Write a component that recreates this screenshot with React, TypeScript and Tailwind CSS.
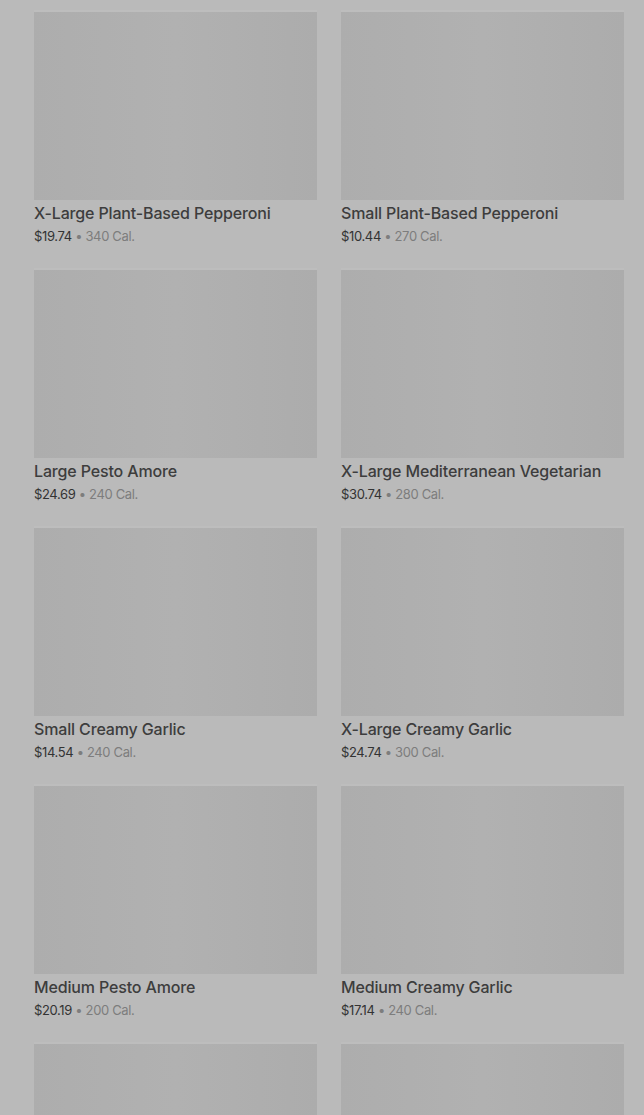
const items = [
  { name: "X-Large Plant-Based Pepperoni", price: "$19.74", cal: "340 Cal." },
  { name: "Small Plant-Based Pepperoni", price: "$10.44", cal: "270 Cal." },
  { name: "Large Pesto Amore", price: "$24.69", cal: "240 Cal." },
  { name: "X-Large Mediterranean Vegetarian", price: "$30.74", cal: "280 Cal." },
  { name: "Small Creamy Garlic", price: "$14.54", cal: "240 Cal." },
  { name: "X-Large Creamy Garlic", price: "$24.74", cal: "300 Cal." },
  { name: "Medium Pesto Amore", price: "$20.19", cal: "200 Cal." },
  { name: "Medium Creamy Garlic", price: "$17.14", cal: "240 Cal." },
  { name: "", price: "", cal: "" },
  { name: "", price: "", cal: "" },
];

export default function App() {
  return (
    <div
      className="h-[1115px] overflow-hidden bg-[#bababa] pl-[34px] pr-[20px] pt-[12px]"
      style={{ fontFamily: "Inter, Roboto, sans-serif" }}
    >
      <div className="grid grid-cols-2 gap-x-[24px] gap-y-[26px]">
        {items.map((item, i) => (
          <div key={i} className="flex flex-col">
            <div className="h-[188px] bg-gradient-to-r from-[#adadad] via-[#b1b1b1] to-[#acacac] shadow-[0_-2px_0_#bdbdbd]" />
            {item.name && (
              <>
                <div className="mt-[3px] text-[16px] font-medium leading-[20px] tracking-[-0.15px] text-[#3d3d3d]">
                  {item.name}
                </div>
                <div className="mt-[5px] text-[13px] leading-[16px] tracking-[-0.35px]">
                  <span className="text-[#333333]">{item.price}</span>
                  <span className="text-[#7d7d7d]"> • {item.cal}</span>
                </div>
              </>
            )}
          </div>
        ))}
      </div>
    </div>
  );
}
